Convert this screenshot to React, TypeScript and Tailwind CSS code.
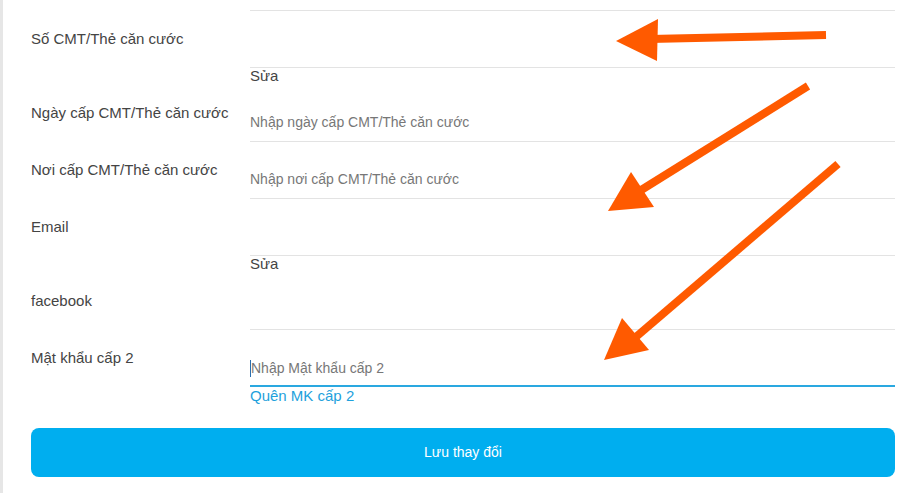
import React from "react";

// Profile form rows: label column + field column with a bottom rule.
type Row = {
  label: string;
  placeholder?: string;
  focused?: boolean;
  after?: React.ReactNode;
};

const rows: Row[] = [
  { label: "Số CMT/Thẻ căn cước", after: <Edit /> },
  { label: "Ngày cấp CMT/Thẻ căn cước", placeholder: "Nhập ngày cấp CMT/Thẻ căn cước" },
  { label: "Nơi cấp CMT/Thẻ căn cước", placeholder: "Nhập nơi cấp CMT/Thẻ căn cước" },
  { label: "Email", after: <Edit /> },
  { label: "facebook" },
  {
    label: "Mật khẩu cấp 2",
    placeholder: "Nhập Mật khẩu cấp 2",
    focused: true,
    after: <div className="h-[19px] text-[15px] leading-[17px] text-[#1ea1dc]">Quên MK cấp 2</div>,
  },
];

function Edit() {
  return <div className="h-[17px] text-[15px] leading-[15px] text-[#444]">Sửa</div>;
}

function Arrows() {
  return (
    <svg
      className="pointer-events-none absolute inset-0"
      width="922"
      height="493"
      viewBox="0 0 922 493"
    >
      <g stroke="#ff5a00" strokeWidth="8" fill="#ff5a00">
        <line x1="826" y1="35" x2="650" y2="39" />
        <polygon points="616,41 658,19 657,61" stroke="none" />
        <line x1="808" y1="86" x2="638" y2="192" />
        <polygon points="608,211 631,172 654,207" stroke="none" />
        <line x1="838" y1="164" x2="630" y2="342" />
        <polygon points="604,360 622,318 649,350" stroke="none" />
      </g>
    </svg>
  );
}

export default function App() {
  return (
    <div
      className="relative h-[493px] w-[922px] overflow-hidden bg-white"
      style={{ fontFamily: '"Liberation Sans", Arial, sans-serif' }}
    >
      <div className="h-full border-l-[3px] border-[#e6e6e6] pl-[28px] pr-[27px]">
        <div className="grid grid-cols-[219px_1fr]">
          <div />
          <div className="h-[11px] border-b border-[#e3e3e3]" />

          {rows.map((r) => (
            <React.Fragment key={r.label}>
              <div className="pt-[18px] text-[15px] leading-5 text-[#444]">{r.label}</div>
              <div>
                <div
                  className={`flex h-[57px] items-end ${
                    r.focused ? "border-b-2 border-[#2aa8e0] pb-[7px]" : "border-b border-[#e3e3e3] pb-[9px]"
                  }`}
                >
                  {r.focused && <span className="mb-[1px] h-[17px] w-px bg-[#2a6fb0]" />}
                  {r.placeholder && (
                    <span className="text-[14px] leading-5 text-[#777]">{r.placeholder}</span>
                  )}
                </div>
                {r.after}
              </div>
            </React.Fragment>
          ))}
        </div>

        <button className="mt-[22px] flex h-[49px] w-full items-center justify-center rounded-lg bg-[#00aeef] text-[14px] text-white">
          Lưu thay đổi
        </button>
      </div>
      <Arrows />
    </div>
  );
}
